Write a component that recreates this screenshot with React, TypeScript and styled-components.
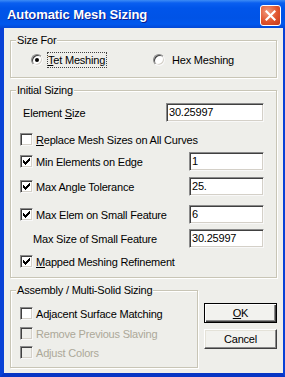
import React from "react";
import styled, { createGlobalStyle } from "styled-components";

const GlobalStyle = createGlobalStyle`
  html, body { margin: 0; padding: 0; background: #fff; }
  body {
    font-family: "Liberation Sans", Arial, sans-serif;
    font-size: 11px;
    letter-spacing: -0.2px;
    color: #000;
  }
`;

const FACE = "#EEEEEA";

const Window = styled.div`
  width: 285px;
  height: 377px;
  display: flex;
  flex-direction: column;
  overflow: hidden;
`;

const TitleBar = styled.div`
  height: 28px;
  flex: none;
  display: flex;
  align-items: center;
  justify-content: space-between;
  padding: 0 4px 0 7px;
  box-sizing: border-box;
  background: linear-gradient(
    to bottom,
    #3d8cf5 0px,
    #0a5ff0 3px,
    #0055ea 8px,
    #0053e6 18px,
    #0058ee 24px,
    #0348d6 28px
  );
`;

const Title = styled.span`
  font-family: "Liberation Sans", Arial, sans-serif;
  font-weight: bold;
  font-size: 13px;
  letter-spacing: -0.1px;
  color: #fff;
  text-shadow: 1px 1px 0 #0a1c8c;
`;

const CloseButton = styled.div`
  width: 21px;
  height: 21px;
  margin-top: 3px;
  box-sizing: border-box;
  border: 1px solid #fff;
  border-radius: 3px;
  background: radial-gradient(circle at 35% 30%, #f29a7e 0%, #e0542d 55%, #c3391b 100%);
  display: flex;
  align-items: center;
  justify-content: center;
`;

const Frame = styled.div`
  flex: 1;
  display: flex;
  border-left: 4px solid #0841d6;
  border-right: 3px solid #0841d6;
  border-bottom: 4px solid #0735c4;
`;

const Client = styled.div`
  flex: 1;
  background: ${FACE};
  padding: 12px 6px 0 6px;
  display: flex;
  flex-direction: column;
`;

const Group = styled.div<{ $h: number; $w?: number; $top?: number }>`
  box-sizing: border-box;
  height: ${(p) => p.$h}px;
  ${(p) => (p.$w ? `width: ${p.$w}px;` : "")}
  margin-top: ${(p) => p.$top ?? 0}px;
  border: 1px solid #c8c5b6;
  box-shadow: inset 1px 1px 0 #fff, 1px 1px 0 #fff;
  display: flex;
  flex-direction: column;
`;

const Legend = styled.div`
  width: fit-content;
  margin: -7px 0 0 5px;
  padding: 0 1px;
  line-height: 13px;
  background: ${FACE};
`;

const RadioRow = styled.div`
  display: flex;
  align-items: center;
  height: 16px;
  margin-top: 5px;
  padding-left: 20px;
`;

const RadioOption = styled.div`
  width: 122px;
  display: flex;
  align-items: center;
`;

const RadioCircle = styled.div<{ $checked?: boolean }>`
  width: 12px;
  height: 12px;
  box-sizing: border-box;
  border-radius: 50%;
  border: 1px solid;
  border-color: #8a8a8a #f8f8f8 #f8f8f8 #8a8a8a;
  box-shadow: inset 1px 1px 0 #404040, inset -1px -1px 0 #d4d0c8;
  background: #fff;
  display: flex;
  align-items: center;
  justify-content: center;
  &::after {
    content: "";
    width: 4px;
    height: 4px;
    border-radius: 50%;
    background: ${(p) => (p.$checked ? "#000" : "transparent")};
  }
`;

const RadioLabel = styled.span<{ $focus?: boolean; $gap: number }>`
  margin-left: ${(p) => p.$gap}px;
  padding: 0 1px 0 0;
  line-height: 14px;
  border: 1px dotted ${(p) => (p.$focus ? "#444" : "transparent")};
`;

const Row = styled.div<{ $top: number; $indent: number }>`
  display: flex;
  align-items: center;
  height: 19px;
  margin-top: ${(p) => p.$top}px;
  padding-left: ${(p) => p.$indent}px;
  padding-right: 12px;
`;

const Label = styled.span<{ $disabled?: boolean }>`
  flex: 1;
  white-space: nowrap;
  color: ${(p) => (p.$disabled ? "#aca899" : "#000")};
`;

const Box = styled.div<{ $disabled?: boolean }>`
  width: 13px;
  height: 13px;
  flex: none;
  box-sizing: border-box;
  margin-right: 3px;
  border: 1px solid;
  border-color: #8a8a8a #f8f8f8 #f8f8f8 #8a8a8a;
  box-shadow: inset 1px 1px 0 #404040, inset -1px -1px 0 #d4d0c8;
  background: ${(p) => (p.$disabled ? FACE : "#fff")};
  display: flex;
  align-items: center;
  justify-content: center;
`;

const Field = styled.div<{ $w: number }>`
  width: ${(p) => p.$w}px;
  height: 19px;
  flex: none;
  box-sizing: border-box;
  border: 1px solid;
  border-color: #8a8a8a #f8f8f8 #f8f8f8 #8a8a8a;
  box-shadow: inset 1px 1px 0 #404040, inset -1px -1px 0 #d4d0c8;
  background: #fff;
  padding: 0 2px;
  line-height: 17px;
  white-space: nowrap;
`;

const BottomRow = styled.div`
  display: flex;
  margin-top: 12px;
`;

const ButtonColumn = styled.div`
  display: flex;
  flex-direction: column;
  gap: 6px;
  margin-left: 6px;
  padding-top: 13px;
`;

const Button = styled.div<{ $default?: boolean }>`
  width: 73px;
  height: 20px;
  box-sizing: border-box;
  display: flex;
  align-items: center;
  justify-content: center;
  background: #f2f2ee;
  border: 1px solid;
  border-color: ${(p) => (p.$default ? "#000" : "#fff #404040 #404040 #fff")};
  box-shadow: ${(p) =>
    p.$default
      ? "inset 1px 1px 0 #fff, inset -1px -1px 0 #404040, inset -2px -2px 0 #8a8a8a"
      : "inset -1px -1px 0 #8a8a8a, inset 1px 1px 0 #e4e2d8"};
  font-size: 11px;
`;

const Key = styled.span`
  text-decoration: underline;
  text-underline-offset: 1px;
`;

const Check = () => (
  <svg width="9" height="9" viewBox="0 0 9 9" shapeRendering="crispEdges">
    <path
      d="M1 3h1v1h1v1h1V4h1V3h1V2h1V1h1v3H7v1H6v1H5v1H4v1H3V7H2V6H1z"
      fill="#000"
    />
  </svg>
);

const CheckBox = ({ checked, disabled }: { checked?: boolean; disabled?: boolean }) => (
  <Box $disabled={disabled}>{checked && <Check />}</Box>
);

export default function App() {
  return (
    <>
      <GlobalStyle />
      <Window>
        <TitleBar>
          <Title>Automatic Mesh Sizing</Title>
          <CloseButton>
            <svg width="11" height="11" viewBox="0 0 11 11">
              <path d="M1.5 1.5L9.5 9.5M9.5 1.5L1.5 9.5" stroke="#fff" strokeWidth="2.2" strokeLinecap="square" />
            </svg>
          </CloseButton>
        </TitleBar>
        <Frame>
          <Client>
            <Group $h={38}>
              <Legend>Size For</Legend>
              <RadioRow>
                <RadioOption>
                  <RadioCircle $checked />
                  <RadioLabel $focus $gap={4}>
                    <Key>T</Key>et Meshing
                  </RadioLabel>
                </RadioOption>
                <RadioOption>
                  <RadioCircle />
                  <RadioLabel $gap={6}>Hex Meshing</RadioLabel>
                </RadioOption>
              </RadioRow>
            </Group>

            <Group $h={188} $top={12}>
              <Legend>Initial Sizing</Legend>
              <Row $top={6} $indent={12}>
                <Label>
                  Element <Key>S</Key>ize
                </Label>
                <Field $w={98}>30.25997</Field>
              </Row>
              <Row $top={8} $indent={9}>
                <CheckBox />
                <Label>
                  <Key>R</Key>eplace Mesh Sizes on All Curves
                </Label>
              </Row>
              <Row $top={3} $indent={9}>
                <CheckBox checked />
                <Label>Min Elements on Edge</Label>
                <Field $w={75}>1</Field>
              </Row>
              <Row $top={6} $indent={9}>
                <CheckBox checked />
                <Label>Max Angle Tolerance</Label>
                <Field $w={75}>25.</Field>
              </Row>
              <Row $top={9} $indent={9}>
                <CheckBox checked />
                <Label>Max Elem on Small Feature</Label>
                <Field $w={75}>6</Field>
              </Row>
              <Row $top={5} $indent={22}>
                <Label>Max Size of Small Feature</Label>
                <Field $w={75}>30.25997</Field>
              </Row>
              <Row $top={4} $indent={9}>
                <CheckBox checked />
                <Label>
                  <Key>M</Key>apped Meshing Refinement
                </Label>
              </Row>
            </Group>

            <BottomRow>
              <Group $h={78} $w={188}>
                <Legend>Assembly / Multi-Solid Sizing</Legend>
                <Row $top={7} $indent={9}>
                  <CheckBox />
                  <Label>Adjacent Surface Matching</Label>
                </Row>
                <Row $top={1} $indent={9}>
                  <CheckBox disabled />
                  <Label $disabled>Remove Previous Slaving</Label>
                </Row>
                <Row $top={0} $indent={9}>
                  <CheckBox disabled />
                  <Label $disabled>Adjust Colors</Label>
                </Row>
              </Group>
              <ButtonColumn>
                <Button $default>
                  <Key>O</Key>K
                </Button>
                <Button>Cancel</Button>
              </ButtonColumn>
            </BottomRow>
          </Client>
        </Frame>
      </Window>
    </>
  );
}
